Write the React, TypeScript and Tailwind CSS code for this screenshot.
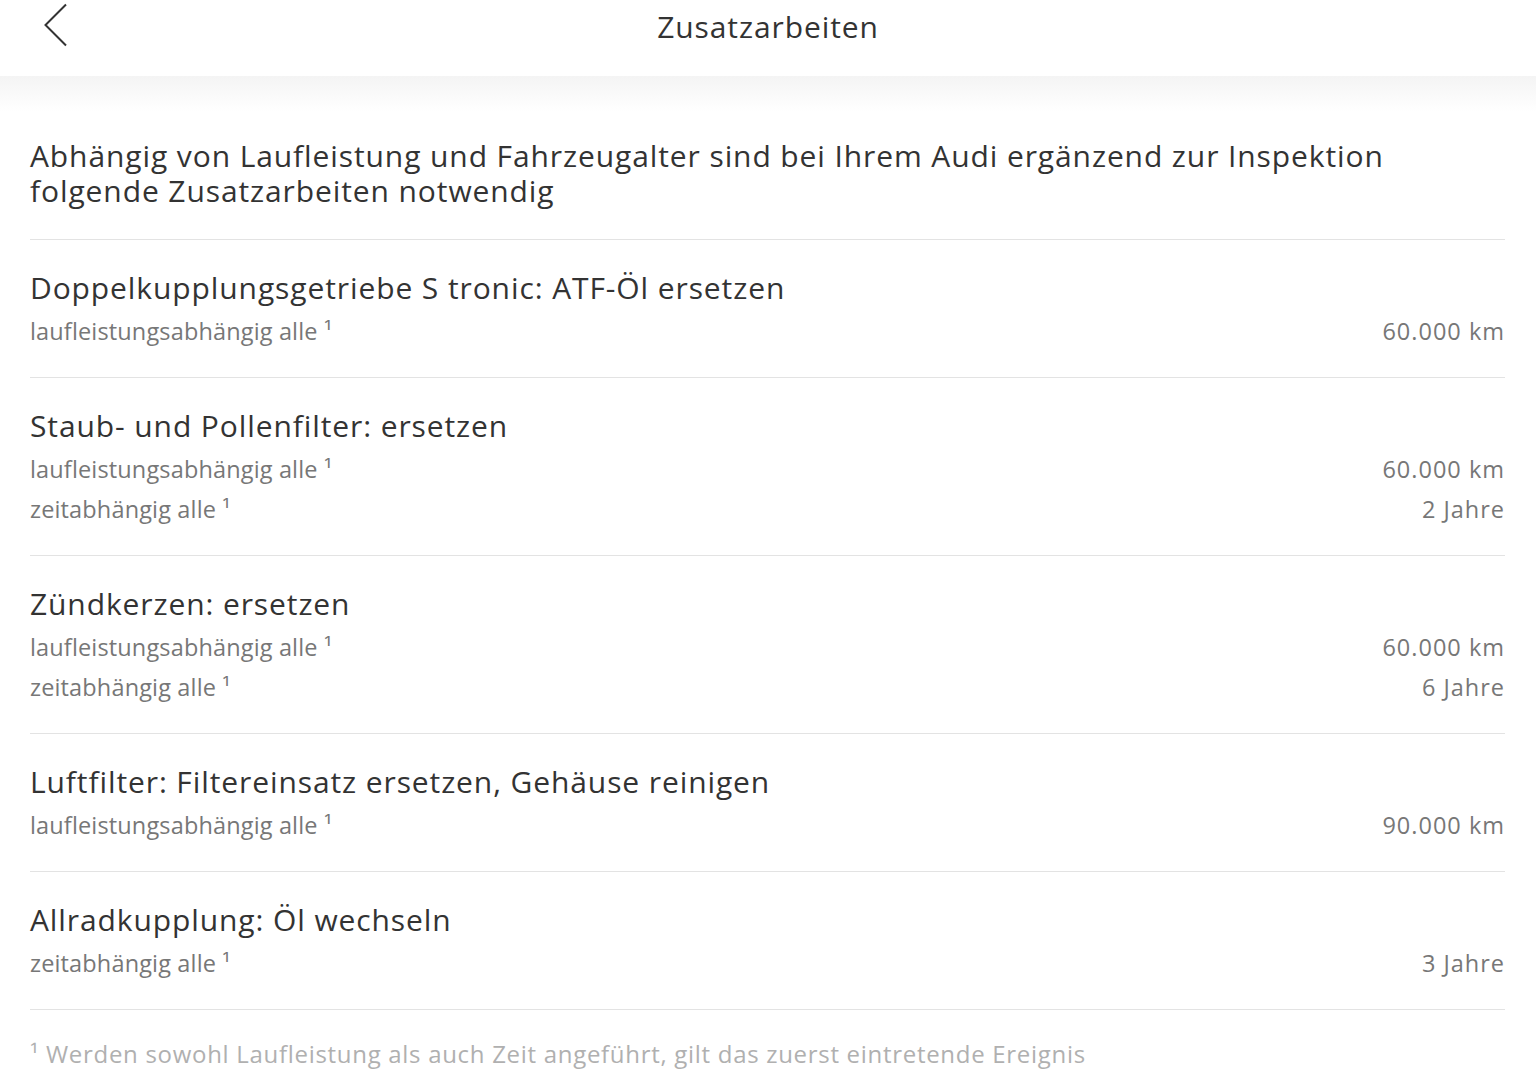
const rows: { title: string; items: [string, string][] }[] = [
  {
    title: 'Doppelkupplungsgetriebe S tronic: ATF-Öl ersetzen',
    items: [['laufleistungsabhängig alle ¹', '60.000 km']],
  },
  {
    title: 'Staub- und Pollenfilter: ersetzen',
    items: [
      ['laufleistungsabhängig alle ¹', '60.000 km'],
      ['zeitabhängig alle ¹', '2 Jahre'],
    ],
  },
  {
    title: 'Zündkerzen: ersetzen',
    items: [
      ['laufleistungsabhängig alle ¹', '60.000 km'],
      ['zeitabhängig alle ¹', '6 Jahre'],
    ],
  },
  {
    title: 'Luftfilter: Filtereinsatz ersetzen, Gehäuse reinigen',
    items: [['laufleistungsabhängig alle ¹', '90.000 km']],
  },
  {
    title: 'Allradkupplung: Öl wechseln',
    items: [['zeitabhängig alle ¹', '3 Jahre']],
  },
];

export default function App() {
  return (
    <div className="min-h-screen bg-white text-[#333] font-['Open_Sans',sans-serif]">
      {/* Header */}
      <header className="relative h-[76px] flex items-center justify-center">
        <button className="absolute left-[42px] top-[3px] w-[28px] h-[44px] flex items-center justify-center">
          <svg width="26" height="44" viewBox="0 0 26 44" fill="none">
            <path d="M23 1.5 L2.5 22 L23 42.5" stroke="#333" strokeWidth="2" />
          </svg>
        </button>
        <h1 className="text-[30px] leading-[40px] tracking-[0.9px] -mt-[22px]">Zusatzarbeiten</h1>
      </header>
      <div className="h-[36px] bg-gradient-to-b from-[#f4f4f4] to-white -mb-[36px]" />

      <main className="px-[30px] pr-[31px]">
        <p className="pt-[62px] pb-[31px] pr-[60px] text-[30px] leading-[35px] tracking-[0.9px]">
          Abhängig von Laufleistung und Fahrzeugalter sind bei Ihrem Audi ergänzend zur Inspektion folgende
          Zusatzarbeiten notwendig
        </p>

        {rows.map((row) => (
          <section key={row.title} className="border-t border-[#e3e3e3] pt-[28px] pb-[26px]">
            <h2 className="text-[30px] leading-[40px] tracking-[0.9px]">{row.title}</h2>
            <div className="mt-[3px]">
              {row.items.map(([label, value]) => (
                <div
                  key={label}
                  className="flex justify-between text-[23.5px] leading-[40px] tracking-[0.15px] text-[#777]"
                >
                  <span>{label}</span>
                  <span className="tracking-[1px]">{value}</span>
                </div>
              ))}
            </div>
          </section>
        ))}

        <p className="border-t border-[#e3e3e3] pt-[26px] text-[24px] leading-[36px] tracking-[0.7px] text-[#b0b0b0]">
          ¹ Werden sowohl Laufleistung als auch Zeit angeführt, gilt das zuerst eintretende Ereignis
        </p>
      </main>
    </div>
  );
}
